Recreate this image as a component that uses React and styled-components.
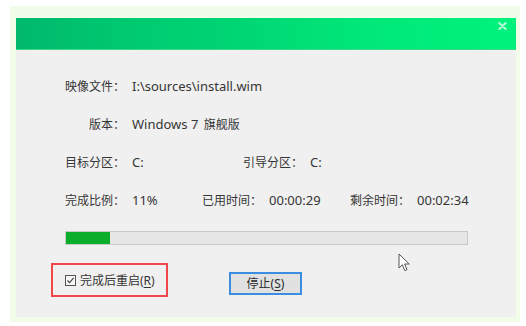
import React from 'react';
import styled, { createGlobalStyle } from 'styled-components';

const GlobalStyle = createGlobalStyle`
  html, body {
    margin: 0;
    padding: 0;
    background: #ffffff;
  }

  body {
    font-family: "Noto Sans", "Noto Sans CJK SC", sans-serif;
    font-size: 13px;
    color: #353535;
  }
`;

const App = () => {
  return (
    <>
      <GlobalStyle />
      <StyledPage>
        <StyledFrame>
          <StyledDialog>
            <StyledHeader>
              <StyledClose>
                <svg width="9" height="8" viewBox="0 0 9 8">
                  <path d="M1.3 1 L7.7 7 M7.7 1 L1.3 7" stroke="rgba(255,255,255,0.7)" strokeWidth="2" strokeLinecap="round" />
                </svg>
              </StyledClose>
            </StyledHeader>
            <StyledBody>
              <StyledRow>
                <StyledField>
                  <StyledLabel $fixed>映像文件：</StyledLabel>
                  <StyledValue>I:\sources\install.wim</StyledValue>
                </StyledField>
              </StyledRow>
              <StyledRow>
                <StyledField>
                  <StyledLabel $fixed>版本：</StyledLabel>
                  <StyledValue>Windows 7 <StyledCjk>旗舰版</StyledCjk></StyledValue>
                </StyledField>
              </StyledRow>
              <StyledRow>
                <StyledField $width={179}>
                  <StyledLabel $fixed>目标分区：</StyledLabel>
                  <StyledValue>C:</StyledValue>
                </StyledField>
                <StyledField>
                  <StyledLabel>引导分区：</StyledLabel>
                  <StyledValue>C:</StyledValue>
                </StyledField>
              </StyledRow>
              <StyledRow>
                <StyledField $width={138}>
                  <StyledLabel $fixed>完成比例：</StyledLabel>
                  <StyledValue>11%</StyledValue>
                </StyledField>
                <StyledField $width={148}>
                  <StyledLabel>已用时间：</StyledLabel>
                  <StyledValue>00:00:29</StyledValue>
                </StyledField>
                <StyledField>
                  <StyledLabel>剩余时间：</StyledLabel>
                  <StyledValue>00:02:34</StyledValue>
                </StyledField>
              </StyledRow>
              <StyledProgress>
                <StyledProgressFill style={{ width: '11%' }} />
              </StyledProgress>
              <StyledActions>
                <StyledHighlight>
                  <StyledCheckbox>
                    <svg width="9" height="9" viewBox="0 0 9 9">
                      <path d="M1.5 4.5 L3.6 6.7 L7.6 1.8" stroke="#444" strokeWidth="1.2" fill="none" />
                    </svg>
                  </StyledCheckbox>
                  <span>完成后重启(<u>R</u>)</span>
                </StyledHighlight>
                <StyledButton>停止(<u>S</u>)</StyledButton>
              </StyledActions>
              <StyledCursor>
                <svg width="13" height="19" viewBox="0 0 13 19">
                  <path d="M1 1 L1 15 L4.3 11.8 L6.8 17.6 L9 16.6 L6.6 11 L11.2 11 Z" fill="#ffffff" stroke="#555555" strokeWidth="1" strokeLinejoin="round" />
                </svg>
              </StyledCursor>
            </StyledBody>
          </StyledDialog>
        </StyledFrame>
      </StyledPage>
    </>
  );
};

export default App;

const StyledPage = styled.div`
  width: 526px;
  height: 326px;
  padding: 6px 0 0 10px;
  box-sizing: border-box;
`;

const StyledFrame = styled.div`
  width: 510px;
  height: 316px;
  background: #f2fde9;
  padding: 12px 4px 5px 6px;
  box-sizing: border-box;
`;

const StyledDialog = styled.div`
  width: 500px;
  height: 299px;
  background: #f0f0f0;
  display: flex;
  flex-direction: column;
`;

const StyledHeader = styled.div`
  height: 31px;
  flex-shrink: 0;
  background: linear-gradient(90deg, #00b86c 0%, #00c870 20%, #00d674 45%, #00e879 70%, #00f27c 100%);
  border-bottom: 1px solid #3bd98a;
  position: relative;
`;

const StyledClose = styled.div`
  position: absolute;
  top: 4px;
  right: 9px;
  display: flex;
`;

const StyledBody = styled.div`
  position: relative;
  flex: 1;
  padding: 17px 0 0 48px;
  display: flex;
  flex-direction: column;
`;

const StyledRow = styled.div`
  height: 38px;
  display: flex;
  align-items: center;
`;

const StyledField = styled.div`
  display: flex;
  align-items: center;
  gap: 7px;
  width: ${props => (props.$width ? `${props.$width}px` : 'auto')};
  flex-shrink: 0;
  white-space: nowrap;
`;

const StyledLabel = styled.span`
  width: ${props => (props.$fixed ? '61px' : 'auto')};
  flex-shrink: 0;
  text-align: right;
  font-size: 12px;
  color: #353535;
`;

const StyledValue = styled.span`
  color: #353535;
`;

const StyledCjk = styled.span`
  font-size: 12px;
  margin-left: 2px;
`;

const StyledProgress = styled.div`
  margin-top: 12px;
  margin-left: 1px;
  width: 401px;
  height: 12px;
  background: #e6e6e6;
  border: 1px solid #c9c9c9;
`;

const StyledProgressFill = styled.div`
  height: 100%;
  background: #0aae2b;
`;

const StyledActions = styled.div`
  margin-top: 18px;
  margin-left: -13px;
  display: flex;
  align-items: center;
  gap: 61px;
`;

const StyledHighlight = styled.div`
  width: 117px;
  height: 34px;
  border: 2px solid #f04848;
  box-sizing: border-box;
  display: flex;
  align-items: center;
  padding-left: 12px;
  gap: 4px;
  font-size: 12px;
  color: #353535;
  white-space: nowrap;

  u {
    text-underline-offset: 2px;
  }
`;

const StyledCheckbox = styled.span`
  width: 11px;
  height: 11px;
  border: 1px solid #555555;
  box-sizing: border-box;
  display: flex;
  align-items: center;
  justify-content: center;
  background: #f7f7f7;
`;

const StyledButton = styled.button`
  width: 73px;
  height: 23px;
  margin-top: 6px;
  border: 2px solid #3a8de0;
  background: #e1e1e1;
  font-family: "Noto Sans", "Noto Sans CJK SC", sans-serif;
  font-size: 12px;
  color: #2a2a2a;
  padding: 0;
  display: flex;
  align-items: center;
  justify-content: center;

  u {
    text-underline-offset: 2px;
  }
`;

const StyledCursor = styled.div`
  position: absolute;
  left: 382px;
  top: 203px;
  display: flex;
`;
